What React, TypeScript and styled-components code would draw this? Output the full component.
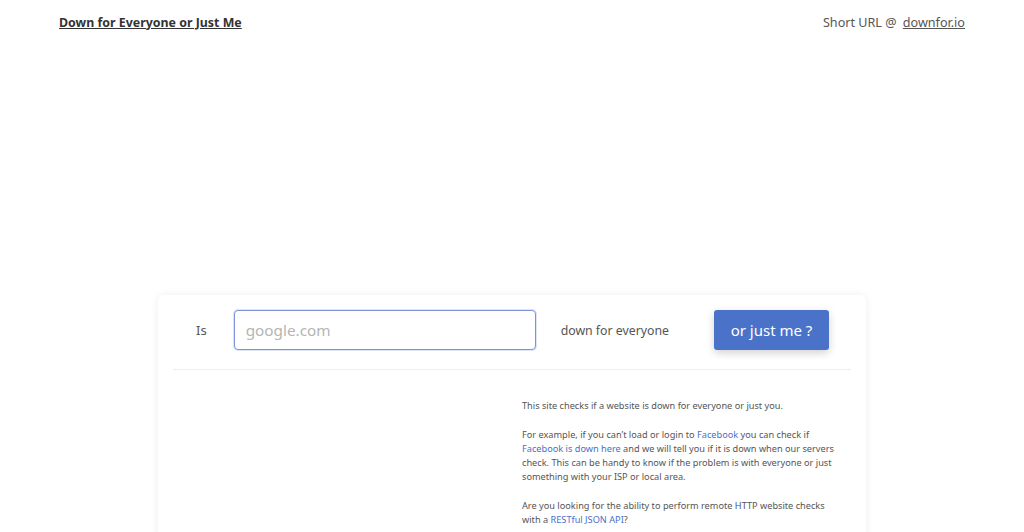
import React, { useState } from "react";
import styled, { createGlobalStyle } from "styled-components";

const GlobalStyle = createGlobalStyle`
  html, body {
    margin: 0;
    padding: 0;
    background: #fff;
  }
  body {
    font-family: "Noto Sans", "Open Sans", sans-serif;
    color: #555;
  }
`;

const App: React.FC = () => {
  const [site, setSite] = useState("");

  const handleSubmit = (event: React.FormEvent<HTMLFormElement>) => {
    event.preventDefault();
  };

  return (
    <Page>
      <GlobalStyle />
      <Header>
        <Brand href="#">Down for Everyone or Just Me</Brand>
        <ShortUrl>
          Short URL @ <ShortLink href="#">downfor.io</ShortLink>
        </ShortUrl>
      </Header>
      <Main>
        <Card>
          <Form onSubmit={handleSubmit}>
            <Label htmlFor="site">Is</Label>
            <Input
              id="site"
              type="text"
              placeholder="google.com"
              value={site}
              onChange={(e) => setSite(e.target.value)}
            />
            <Label htmlFor="site" $wide>
              down for everyone
            </Label>
            <Button type="submit">or just me ?</Button>
          </Form>
          <Divider />
          <Columns>
            <div />
            <About>
              <p>This site checks if a website is down for everyone or just you.</p>
              <p>
                For example, if you can’t load or login to <Link href="#">Facebook</Link> you can
                check if <Link href="#">Facebook is down here</Link> and we will tell you if it is
                down when our servers check. This can be handy to know if the problem is with
                everyone or just something with your ISP or local area.
              </p>
              <p>
                Are you looking for the ability to perform remote HTTP website checks with a{" "}
                <Link href="#">RESTful JSON API</Link>?
              </p>
            </About>
          </Columns>
        </Card>
      </Main>
    </Page>
  );
};

const Page = styled.div`
  min-height: 532px;
`;

const Header = styled.header`
  display: flex;
  justify-content: space-between;
  align-items: center;
  padding: 12px 59px 0;
  height: 20px;
`;

const Brand = styled.a`
  font-size: 12.4px;
  font-weight: 700;
  color: #333;
  text-decoration: underline;
`;

const ShortUrl = styled.div`
  font-size: 12.6px;
  color: #555;
`;

const ShortLink = styled.a`
  color: #555;
  margin-left: 3px;
  text-decoration: underline;
`;

const Main = styled.main`
  display: flex;
  justify-content: center;
  padding-top: 263px;
`;

const Card = styled.section`
  width: 708px;
  box-sizing: border-box;
  padding: 15px 15px 20px;
  background: #fff;
  border-radius: 6px;
  box-shadow: 0 0 8px rgba(0, 0, 0, 0.07);
`;

const Form = styled.form`
  display: flex;
  align-items: center;
  height: 40px;
  padding-left: 23px;
`;

const Label = styled.label<{ $wide?: boolean }>`
  font-size: ${(p) => (p.$wide ? "12.3px" : "13px")};
  color: #555;
  margin-right: ${(p) => (p.$wide ? "45px" : "27px")};
  margin-left: ${(p) => (p.$wide ? "25px" : "0")};
`;

const Input = styled.input`
  width: 302px;
  height: 40px;
  box-sizing: border-box;
  border: 1px solid #7d93e0;
  border-radius: 4px;
  padding: 0 11px;
  font-family: inherit;
  font-size: 15.3px;
  color: #333;
  box-shadow: 0 0 0 1px rgba(125, 147, 224, 0.25);

  &::placeholder {
    color: #b5b5b5;
  }

  &:focus {
    outline: none;
  }
`;

const Button = styled.button`
  width: 115px;
  height: 40px;
  border: none;
  border-radius: 3px;
  background: #4a72c9;
  color: #fff;
  font-family: inherit;
  font-size: 15px;
  cursor: pointer;
  box-shadow: 0 3px 8px rgba(0, 0, 0, 0.18);
`;

const Divider = styled.hr`
  border: none;
  border-top: 1px solid #eee;
  margin: 19px 0 0;
`;

const Columns = styled.div`
  display: grid;
  grid-template-columns: 1fr 1fr;
  gap: 20px;
  padding-top: 29px;
`;

const About = styled.div`
  max-width: 316px;
  font-size: 9.2px;
  line-height: 14.3px;
  color: #555;

  p {
    margin: 0 0 14.3px;
  }
`;

const Link = styled.a`
  color: #4a6fc9;
  text-decoration: none;
`;

export default App;
